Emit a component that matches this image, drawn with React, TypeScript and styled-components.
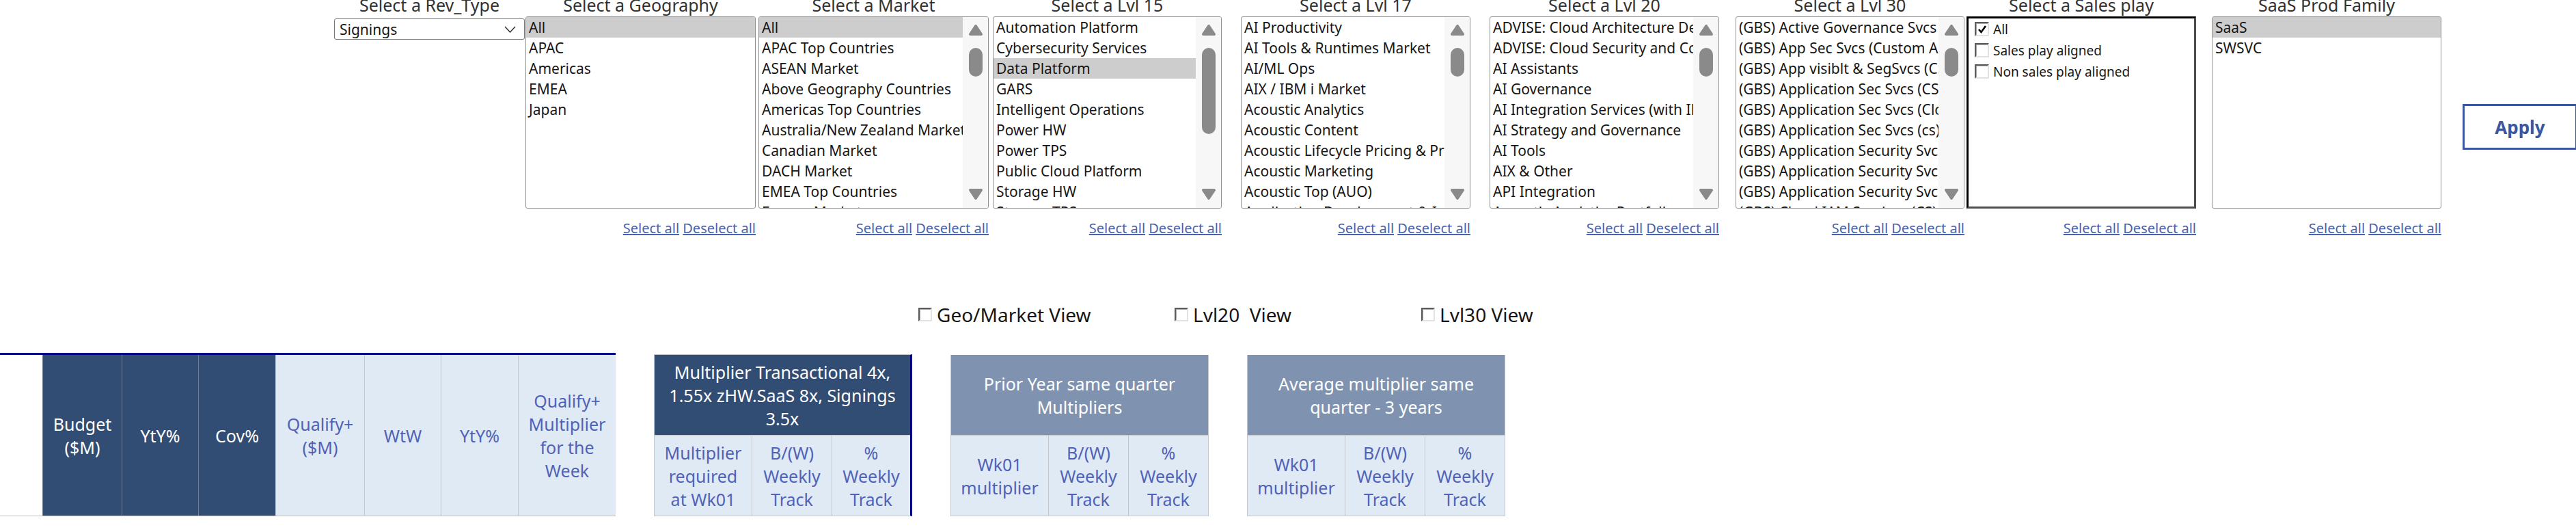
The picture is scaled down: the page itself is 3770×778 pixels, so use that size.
import styled, { createGlobalStyle } from "styled-components";

const navy = "#000080";
const darkCell = "#324d73";
const midCell = "#7f93b0";
const paleCell = "#e0eaf5";
const paleText = "#4f62b8";
const linkBlue = "#4a63ad";
const rule = "#c3c6cb";

const Global = createGlobalStyle`
  html, body { margin: 0; padding: 0; background: #fff; }
  body { font-family: "Noto Sans", "Open Sans", sans-serif; color: #161616; }
`;

const Page = styled.div`
  width: 3770px;
  height: 778px;
  overflow: hidden;
`;

/* ---------- filter bar ---------- */

const FilterBar = styled.div`
  display: flex;
  align-items: flex-start;
  padding-left: 489px;
`;

const FilterCol = styled.div<{ $w: number; $gap?: number }>`
  flex: none;
  width: ${(p) => p.$w}px;
  margin-left: ${(p) => p.$gap ?? 0}px;
  display: flex;
  flex-direction: column;
`;

// the page is scrolled a little, so the labels' tops sit under the window edge
const Label = styled.div`
  height: 24px;
  font-size: 25px;
  line-height: 15px;
  text-align: center;
  white-space: nowrap;
  color: #323232;
`;

const Dropdown = styled.div`
  margin-top: 3px;
  height: 31px;
  box-sizing: border-box;
  border: 1px solid #767676;
  border-radius: 3px;
  display: flex;
  align-items: center;
  justify-content: space-between;
  padding: 0 12px 0 7px;
  font-size: 21px;
`;

const ListBox = styled.div`
  height: 281px;
  box-sizing: border-box;
  border: 1px solid #8f8f8f;
  border-radius: 3px;
  background: #fff;
  display: flex;
  overflow: hidden;
`;

const Items = styled.div`
  flex: 1;
  min-width: 0;
  overflow: hidden;
`;

const Item = styled.div<{ $sel?: boolean }>`
  height: 30px;
  line-height: 30px;
  padding-left: 4px;
  font-size: 21px;
  white-space: nowrap;
  overflow: hidden;
  background: ${(p) => (p.$sel ? "#cdcdcd" : "transparent")};
`;

const Track = styled.div`
  flex: none;
  width: 37px;
  box-sizing: border-box;
  padding: 10px 0 11px;
  background: #f7f7f7;
  display: flex;
  flex-direction: column;
  align-items: center;
`;

const Thumb = styled.div<{ $h: number }>`
  width: 20px;
  height: ${(p) => p.$h}px;
  margin-top: 17px;
  border-radius: 10px;
  background: #8a8a8a;
`;

const Fill = styled.div`
  flex: 1;
`;

const SalesBox = styled.div`
  height: 281px;
  box-sizing: border-box;
  border: 3px solid;
  border-color: #000 #4d4d4d #4d4d4d #000;
  padding-left: 9px;
  display: flex;
  flex-direction: column;
`;

const CheckRow = styled.div`
  height: 31px;
  display: flex;
  align-items: center;
  gap: 6px;
  font-size: 19px;
  white-space: nowrap;
`;

const Box = styled.span<{ $size: number }>`
  flex: none;
  width: ${(p) => p.$size}px;
  height: ${(p) => p.$size}px;
  box-sizing: border-box;
  border: 2px solid;
  border-color: #5c5c5c #e2e2e2 #e2e2e2 #5c5c5c;
  box-shadow: inset 1px 1px 0 #a8a8a8;
  background: #fff;
  display: inline-flex;
  align-items: center;
  justify-content: center;
`;

const Links = styled.div`
  margin-top: 19px;
  text-align: right;
  font-size: 20px;
  line-height: 20px;
  white-space: nowrap;
`;

const LinkA = styled.a`
  color: ${linkBlue};
  text-decoration: underline;
  cursor: pointer;
`;

const ApplyButton = styled.button`
  flex: none;
  margin: 152px 0 0 31px;
  width: 168px;
  height: 67px;
  box-sizing: border-box;
  border: 3px solid #3b56a0;
  background: #fff;
  color: #3b56a0;
  font-family: inherit;
  font-size: 26px;
  font-weight: 700;
  padding: 0;
`;

/* ---------- view toggles ---------- */

const ViewRow = styled.div`
  display: grid;
  grid-template-columns: 375px 361px auto;
  padding-left: 1344px;
  margin-top: 97px;
  height: 30px;
`;

const ViewItem = styled.label`
  display: flex;
  align-items: center;
  gap: 7px;
  font-size: 28px;
  white-space: pre;
`;

/* ---------- header tables ---------- */

const TableRow = styled.div`
  display: flex;
  align-items: flex-start;
  gap: 56px;
  margin-top: 45px;
`;

const MainTable = styled.div`
  display: flex;
  border-top: 3px solid ${navy};
  border-bottom: 1px solid #bfbfbf;
`;

type Tone = "blank" | "dark" | "light";

const HeadCell = styled.div<{ $w: number; $tone: Tone }>`
  flex: none;
  width: ${(p) => p.$w}px;
  height: 235px;
  box-sizing: border-box;
  display: flex;
  align-items: center;
  justify-content: center;
  text-align: center;
  font-size: 25px;
  line-height: 34px;
  padding: 0 2px;
  background: ${(p) =>
    p.$tone === "dark" ? darkCell : p.$tone === "light" ? paleCell : "#fff"};
  color: ${(p) => (p.$tone === "dark" ? "#fff" : paleText)};
  border-left: 1px solid
    ${(p) => (p.$tone === "dark" ? "#6f7f99" : p.$tone === "light" ? rule : "transparent")};
`;

const MultTable = styled.div<{ $accent?: boolean }>`
  flex: none;
  width: 378px;
  box-sizing: border-box;
  display: grid;
  grid-template-columns: 142px 117px 1fr;
  margin-top: ${(p) => (p.$accent ? 2 : 3)}px;
  border-left: 1px solid ${rule};
  border-bottom: 1px solid ${rule};
  border-top: ${(p) => (p.$accent ? `1px solid ${rule}` : "none")};
  border-right: ${(p) => (p.$accent ? `3px solid ${navy}` : `1px solid ${rule}`)};
`;

const MultHead = styled.div<{ $tone: "dark" | "mid" }>`
  grid-column: 1 / -1;
  height: 118px;
  box-sizing: border-box;
  border-bottom: 1px solid ${rule};
  background: ${(p) => (p.$tone === "dark" ? darkCell : midCell)};
  color: #fff;
  display: flex;
  align-items: center;
  justify-content: center;
  text-align: center;
  font-size: 25px;
  line-height: 34px;
  white-space: nowrap;
`;

const SubCell = styled.div`
  height: 117px;
  background: ${paleCell};
  color: ${paleText};
  display: flex;
  align-items: center;
  justify-content: center;
  text-align: center;
  font-size: 25px;
  line-height: 34px;
  white-space: nowrap;
  & + & {
    border-left: 1px solid ${rule};
  }
`;

/* ---------- small drawings ---------- */

const Arrow = ({ down }: { down?: boolean }) => (
  <svg width="22" height="18" viewBox="0 0 22 18">
    <path
      d={down ? "M3 3 L19 3 L11 15 Z" : "M11 3 L19 15 L3 15 Z"}
      fill="#8a8a8a"
      stroke="#8a8a8a"
      strokeWidth="4"
      strokeLinejoin="round"
    />
  </svg>
);

const Chevron = () => (
  <svg width="17" height="10" viewBox="0 0 17 10">
    <polyline points="1,1 8.5,9 16,1" fill="none" stroke="#333" strokeWidth="1.5" />
  </svg>
);

const Check = ({ checked, size = 21 }: { checked?: boolean; size?: number }) => (
  <Box $size={size}>
    {checked && (
      <svg width="14" height="14" viewBox="0 0 14 14">
        <polyline points="2,7 5.5,11 12,2" fill="none" stroke="#000" strokeWidth="2.6" />
      </svg>
    )}
  </Box>
);

/* ---------- data ---------- */

type Filter = {
  label: string;
  w: number;
  gap: number;
  items: string[];
  sel?: string;
  thumb?: number;
};

const filters: Filter[] = [
  {
    label: "Select a Geography",
    w: 337,
    gap: 1,
    items: ["All", "APAC", "Americas", "EMEA", "Japan"],
    sel: "All",
  },
  {
    label: "Select a Market",
    w: 337,
    gap: 4,
    sel: "All",
    thumb: 42,
    items: [
      "All",
      "APAC Top Countries",
      "ASEAN Market",
      "Above Geography Countries",
      "Americas Top Countries",
      "Australia/New Zealand Market",
      "Canadian Market",
      "DACH Market",
      "EMEA Top Countries",
      "Europe Market",
    ],
  },
  {
    label: "Select a Lvl 15",
    w: 335,
    gap: 6,
    sel: "Data Platform",
    thumb: 126,
    items: [
      "Automation Platform",
      "Cybersecurity Services",
      "Data Platform",
      "GARS",
      "Intelligent Operations",
      "Power HW",
      "Power TPS",
      "Public Cloud Platform",
      "Storage HW",
      "Storage TPS",
    ],
  },
  {
    label: "Select a Lvl 17",
    w: 336,
    gap: 28,
    thumb: 42,
    items: [
      "AI Productivity",
      "AI Tools & Runtimes Market",
      "AI/ML Ops",
      "AIX / IBM i Market",
      "Acoustic Analytics",
      "Acoustic Content",
      "Acoustic Lifecycle Pricing & Promotion",
      "Acoustic Marketing",
      "Acoustic Top (AUO)",
      "Application Development & Integration",
    ],
  },
  {
    label: "Select a Lvl 20",
    w: 336,
    gap: 28,
    thumb: 42,
    items: [
      "ADVISE: Cloud Architecture Design",
      "ADVISE: Cloud Security and Compliance",
      "AI Assistants",
      "AI Governance",
      "AI Integration Services (with IBM)",
      "AI Strategy and Governance",
      "AI Tools",
      "AIX & Other",
      "API Integration",
      "Acoustic Analytics Portfolio",
    ],
  },
  {
    label: "Select a Lvl 30",
    w: 335,
    gap: 24,
    thumb: 42,
    items: [
      "(GBS) Active Governance Svcs (CS)",
      "(GBS) App Sec Svcs (Custom Apps)",
      "(GBS) App visiblt & SegSvcs (CS)",
      "(GBS) Application Sec Svcs (CS)",
      "(GBS) Application Sec Svcs (Cloud)",
      "(GBS) Application Sec Svcs (cs)",
      "(GBS) Application Security Svcs",
      "(GBS) Application Security Svcs",
      "(GBS) Application Security Svcs",
      "(GBS) Cloud IAM Services (CS)",
    ],
  },
];

const salesPlays = [
  { name: "All", checked: true },
  { name: "Sales play aligned" },
  { name: "Non sales play aligned" },
];

const mainHeads: { w: number; tone: Tone; text: React.ReactNode }[] = [
  { w: 62, tone: "blank", text: "" },
  { w: 116, tone: "dark", text: <>Budget<br />($M)</> },
  { w: 112, tone: "dark", text: "YtY%" },
  { w: 113, tone: "dark", text: "Cov%" },
  { w: 130, tone: "light", text: <>Qualify+<br />($M)</> },
  { w: 112, tone: "light", text: "WtW" },
  { w: 113, tone: "light", text: "YtY%" },
  { w: 143, tone: "light", text: <>Qualify+<br />Multiplier<br />for the<br />Week</> },
];

const trackCells = [
  <>B/(W)<br />Weekly<br />Track</>,
  <>%<br />Weekly<br />Track</>,
];

const FilterLinks = () => (
  <Links>
    <LinkA>Select all</LinkA> <LinkA>Deselect all</LinkA>
  </Links>
);

const App = () => (
  <Page>
    <Global />
    <FilterBar>
      <FilterCol $w={279}>
        <Label>Select a Rev_Type</Label>
        <Dropdown>
          <span>Signings</span>
          <Chevron />
        </Dropdown>
      </FilterCol>

      {filters.map((f) => (
        <FilterCol key={f.label} $w={f.w} $gap={f.gap}>
          <Label>{f.label}</Label>
          <ListBox>
            <Items>
              {f.items.map((it, i) => (
                <Item key={i} $sel={it === f.sel}>
                  {it}
                </Item>
              ))}
            </Items>
            {f.thumb && (
              <Track>
                <Arrow />
                <Thumb $h={f.thumb} />
                <Fill />
                <Arrow down />
              </Track>
            )}
          </ListBox>
          <FilterLinks />
        </FilterCol>
      ))}

      <FilterCol $w={336} $gap={3}>
        <Label>Select a Sales play</Label>
        <SalesBox>
          {salesPlays.map((s) => (
            <CheckRow key={s.name}>
              <Check checked={s.checked} />
              {s.name}
            </CheckRow>
          ))}
        </SalesBox>
        <FilterLinks />
      </FilterCol>

      <FilterCol $w={336} $gap={23}>
        <Label>SaaS Prod Family</Label>
        <ListBox>
          <Items>
            <Item $sel>SaaS</Item>
            <Item>SWSVC</Item>
          </Items>
        </ListBox>
        <FilterLinks />
      </FilterCol>

      <ApplyButton>Apply</ApplyButton>
    </FilterBar>

    <ViewRow>
      <ViewItem>
        <Check size={20} />
        Geo/Market View
      </ViewItem>
      <ViewItem>
        <Check size={20} />
        {"Lvl20  View"}
      </ViewItem>
      <ViewItem>
        <Check size={20} />
        Lvl30 View
      </ViewItem>
    </ViewRow>

    <TableRow>
      <MainTable>
        {mainHeads.map((h, i) => (
          <HeadCell key={i} $w={h.w} $tone={h.tone}>
            {h.text}
          </HeadCell>
        ))}
      </MainTable>

      <MultTable $accent>
        <MultHead $tone="dark">
          Multiplier Transactional 4x,
          <br />
          1.55x zHW.SaaS 8x, Signings
          <br />
          3.5x
        </MultHead>
        <SubCell>
          Multiplier
          <br />
          required
          <br />
          at Wk01
        </SubCell>
        {trackCells.map((c, i) => (
          <SubCell key={i}>{c}</SubCell>
        ))}
      </MultTable>

      <MultTable>
        <MultHead $tone="mid">
          Prior Year same quarter
          <br />
          Multipliers
        </MultHead>
        <SubCell>
          Wk01
          <br />
          multiplier
        </SubCell>
        {trackCells.map((c, i) => (
          <SubCell key={i}>{c}</SubCell>
        ))}
      </MultTable>

      <MultTable>
        <MultHead $tone="mid">
          Average multiplier same
          <br />
          quarter - 3 years
        </MultHead>
        <SubCell>
          Wk01
          <br />
          multiplier
        </SubCell>
        {trackCells.map((c, i) => (
          <SubCell key={i}>{c}</SubCell>
        ))}
      </MultTable>
    </TableRow>
  </Page>
);

export default App;
